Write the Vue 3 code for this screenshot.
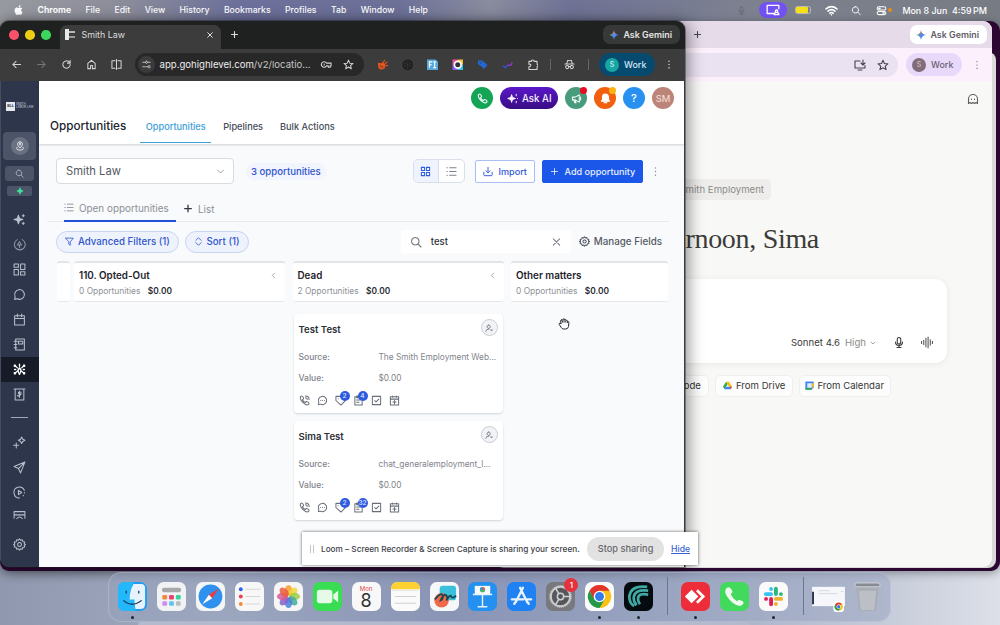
<template>
  <div class="desktop">
    <header class="menubar">
      <svg class="apple" viewBox="0 0 24 24">
        <path
          d="M16.4 12.7c0-2.500 2-3.700 2.100-3.800-1.200-1.700-3-1.900-3.600-2-1.500-.1-3 .9-3.700.9-.8 0-2-.9-3.200-.9-1.700 0-3.200 1-4.100 2.500-1.700 3-.4 7.400 1.300 9.900.8 1.200 1.800 2.500 3.100 2.500 1.200-.1 1.700-.8 3.200-.8s1.900.8 3.200.8 2.200-1.200 3-2.400c.9-1.400 1.300-2.700 1.300-2.800-.1 0-2.600-1-2.600-3.900zM14 5.300c.7-.8 1.100-2 1-3.100-1 0-2.200.7-2.900 1.500-.6.7-1.200 1.900-1 3 1.100.1 2.200-.6 2.900-1.400z"
        />
      </svg>
      <nav class="menus">
        <span v-for="m in menus" :key="m">{{ m }}</span>
      </nav>
      <div class="tray">
        <Icon name="mic" class="tray-mic" />
        <span class="tray-share"><Icon name="screen" /></span>
        <span class="battery"><i /></span>
        <Icon name="wifi" class="tray-wifi" />
        <Icon name="search" class="tray-search" />
        <Icon name="control" class="tray-control" />
        <i class="tray-dot" />
        <span class="clock">Mon 8 Jun&nbsp; 4:59<small> PM</small></span>
      </div>
    </header>

    <div class="slack-window" />
    <div class="grey-window" />

    <!-- Assistant window, mostly covered -->
    <section class="assistant">
      <div class="a-tabs">
        <Icon name="plus" class="a-plus" />
        <span class="gemini light"><GeminiStar />Ask Gemini</span>
      </div>
      <div class="a-toolbar">
        <div class="a-url">
          <Icon name="install" />
          <Icon name="star" />
        </div>
        <span class="profile light"><b>S</b>Work</span>
        <Icon name="dots" class="a-dots" />
      </div>
      <div class="a-page">
        <Icon name="ghost" class="ghost" />
        <div class="a-context"><span>Smith Employment</span></div>
        <h1>Good afternoon, Sima</h1>
        <div class="composer">
          <span class="model">Sonnet 4.6</span>
          <span class="effort">High</span>
          <Icon name="chevronDown" class="chev" />
          <Icon name="mic" class="c-mic" />
          <Icon name="wave" class="c-wave" />
        </div>
        <div class="chips">
          <span>Code</span>
          <span>
            <svg viewBox="0 0 24 24">
              <path d="M8 2h8l8 13h-8z" fill="#fbbc04" />
              <path d="M8 2l4 7-8 13-4-7z" fill="#34a853" />
              <path d="M8 15h16l-4 7H4z" fill="#4285f4" />
              <path d="M18 15h6l-4 7z" fill="#ea4335" />
            </svg>
            From Drive
          </span>
          <span>
            <svg viewBox="0 0 24 24">
              <path d="M1 3q0-2 2-2h18q2 0 2 2v14l-6 6H3q-2 0-2-2z" fill="#4285f4" />
              <path d="M18 6h5v11h-5z" fill="#fbbc04" />
              <path d="M1 18h17v5H3q-2 0-2-2z" fill="#34a853" />
              <path d="M6 6h12v12H6z" fill="#dceafe" />
            </svg>
            From Calendar
          </span>
        </div>
      </div>
    </section>

    <!-- Main browser window -->
    <section class="browser">
      <div class="tabstrip">
        <div class="lights"><i /><i /><i /></div>
        <div class="tab">
          <span class="favicon"><i /><i /></span>
          <span class="tab-title">Smith Law</span>
          <Icon name="close" />
        </div>
        <Icon name="plus" class="newtab" />
        <span class="gemini"><GeminiStar />Ask Gemini</span>
      </div>
      <div class="toolbar">
        <Icon name="back" />
        <Icon name="forward" class="dim" />
        <Icon name="reload" />
        <Icon name="home" />
        <Icon name="split" />
        <div class="url">
          <span class="tune"><Icon name="tune" /></span>
          <span class="address">app.gohighlevel.com<em>/v2/locatio...</em></span>
          <Icon name="key" class="key" />
          <Icon name="star" />
        </div>
        <div class="exts">
          <svg viewBox="0 0 24 24">
            <path d="M2 8l7 1 2-3 7 6-2 8q-9 5-13-2z" fill="#e8541c" />
            <path d="M13 8l3-6M16 10l6-4M18 14h5" stroke="#e8541c" stroke-width="2.500" />
            <path d="M7 13q1 5 6 4" stroke="#3c3c3c" stroke-width="2" fill="none" />
          </svg>
          <svg viewBox="0 0 24 24">
            <circle cx="12" cy="12" r="11" fill="#1b1b1b" />
            <path d="M12 4l7 4v8l-7 4-7-4V8zM5 8l14 8M19 8L5 16M12 4v16" stroke="#454545" fill="none" />
          </svg>
          <svg viewBox="0 0 24 24">
            <path d="M0 1h18l6 6v16H0z" fill="#58a9dc" />
            <path d="M5 18V6h6M5 12h5M13 6h6M16 6v12M13 18h6" stroke="#fff" stroke-width="2.200" fill="none" />
          </svg>
          <svg viewBox="0 0 24 24">
            <path d="M1 1h11v11H1z" fill="#f04fa0" />
            <path d="M12 1h11v11H12z" fill="#f3c02f" />
            <path d="M1 12h11v11H1z" fill="#8a5cf0" />
            <path d="M12 12h11v11H12z" fill="#35c2e0" />
            <circle cx="12" cy="12" r="7" fill="#333" stroke="#fff" stroke-width="3.500" />
          </svg>
          <svg viewBox="0 0 24 24">
            <path d="M2 3h9l11 10-8 8-5-6-7-4z" fill="#2568cf" />
            <circle cx="7" cy="8" r="2" fill="#174a99" />
          </svg>
          <svg viewBox="0 0 24 24" fill="none" stroke-width="3">
            <path d="M2 14l5 4 4-5" stroke="#3156c9" />
            <path d="M11 13h8" stroke="#7c3fc4" />
            <path d="M19 14l2-8" stroke="#8f35b5" />
          </svg>
          <Icon name="puzzle" />
        </div>
        <i class="sep" />
        <Icon name="incognito" class="incog" />
        <i class="sep" />
        <span class="profile"><b>S</b>Work</span>
        <Icon name="dots" class="t-dots" />
      </div>

      <div class="app">
        <aside class="sidebar">
          <div class="logo"><b>SLL</b><span>SMITH<br />LABOR LAW</span></div>
          <div class="account"><span><Icon name="person" /></span></div>
          <div class="side-search"><Icon name="search" /></div>
          <div class="side-ai">
            <svg viewBox="0 0 24 24"><path d="M12 1l4 7 7 4-7 4-4 7-4-7-7-4 7-4z" /></svg>
          </div>
          <div v-for="s in sideTop" :key="s" class="side-item" :class="{ active: s === 'nodes' }">
            <Icon :name="s" :class="'side-' + s" />
          </div>
          <div class="side-line" />
          <div v-for="s in sideBottom" :key="s" class="side-item" :class="'item-' + s">
            <Icon :name="s" />
          </div>
        </aside>

        <main class="page">
          <div class="page-head">
            <div class="actions">
              <span class="round green"><Icon name="phone" /></span>
              <span class="ask-ai"><Icon name="sparkles" />Ask AI</span>
              <span class="round teal"><Icon name="megaphone" /><i class="dot red" /></span>
              <span class="round orange"><Icon name="bell" class="bell" /><i class="dot amber" /></span>
              <span class="round blue">?</span>
              <span class="round rose">SM</span>
            </div>
            <div class="page-tabs">
              <h2>Opportunities</h2>
              <span class="on">Opportunities</span>
              <span>Pipelines</span>
              <span>Bulk Actions</span>
            </div>
          </div>

          <div class="controls">
            <div class="select">Smith Law<Icon name="chevronDown" /></div>
            <span class="count">3 opportunities</span>
            <div class="toggle">
              <span class="sel"><Icon name="grid" /></span>
              <span><Icon name="list" /></span>
            </div>
            <button class="import"><Icon name="download" />Import</button>
            <button class="add"><Icon name="plus" />Add opportunity</button>
            <Icon name="dots" class="more" />
          </div>

          <div class="lists">
            <span class="open"><Icon name="list" />Open opportunities</span>
            <span class="new"><Icon name="plus" />List</span>
          </div>

          <div class="filters">
            <span class="pill"><Icon name="filter" />Advanced Filters (1)</span>
            <span class="pill sort"><Icon name="sort" />Sort (1)</span>
            <div class="search">
              <Icon name="search" />
              <span>test</span>
              <Icon name="close" class="clear" />
            </div>
            <span class="manage"><Icon name="gear" />Manage Fields</span>
          </div>

          <div class="board">
            <div class="col stub"><div class="col-head" /></div>
            <div v-for="c in columns" :key="c.title" class="col" :class="{ last: c.last }">
              <div class="col-head">
                <b>{{ c.title }}</b>
                <Icon v-if="!c.last" name="chevronLeft" />
                <p>{{ c.count }} Opportunities <strong>$0.00</strong></p>
              </div>
              <article v-for="d in c.cards" :key="d.name" class="card">
                <h3>{{ d.name }}</h3>
                <span class="owner"><Icon name="userX" /></span>
                <dl>
                  <dt>Source:</dt>
                  <dd>{{ d.source }}</dd>
                  <dt>Value:</dt>
                  <dd>$0.00</dd>
                </dl>
                <div class="card-icons">
                  <span v-for="i in cardIcons" :key="i">
                    <Icon :name="i" />
                    <i v-if="d.badges[i]">{{ d.badges[i] }}</i>
                  </span>
                </div>
              </article>
            </div>
          </div>
        </main>
      </div>
    </section>

    <svg class="hand" viewBox="0 0 24 24">
      <path
        d="M6 13l-1.500-2q-3 0-2 3l4 6q1.500 3 5 3h3.500q5 0 6-5l.8-8q0-2.500-2.800-2V7q-1-2.500-3.500-1.500Q15 2.500 12 3.500 9.500 1.500 8 4.500 5 4 5.500 7z"
      />
      <path d="M8 5l1 5M12 4v6M15.500 6v4M19 8l-.5 3" />
    </svg>

    <div class="sharing">
      <span class="grip" />
      <span class="share-text">Loom – Screen Recorder &amp; Screen Capture is sharing your screen.</span>
      <span class="stop">Stop sharing</span>
      <a>Hide</a>
    </div>

    <footer class="dock">
      <div class="dock-item running">
        <svg viewBox="0 0 30 30">
          <rect width="30" height="30" rx="7" fill="#1f9df5" />
          <path d="M7 0h9q-4 8-4 17h5q0 7 1 13H7q-7 0-7-7V7q0-7 7-7z" fill="#23b8fb" />
          <path d="M16 2h8q4 0 4 4v17q0 5-5 5h-5q-1-5-1-10h-5q0-9 4-16z" fill="#e6f3fd" />
          <path d="M8.500 9v3M21.500 9v3M5.500 19q9 8 19 0" stroke="#153a5c" stroke-width="1.300" fill="none" />
        </svg>
      </div>
      <div class="dock-item">
        <svg viewBox="0 0 30 30">
          <rect width="30" height="30" rx="7" fill="#f1f2f4" />
          <rect x="5" y="6" width="20" height="4.500" rx="2.200" fill="#a8a8a8" />
          <rect v-for="(c, i) in launchColors" :key="i" :x="5.500 + (i % 3) * 7" :y="13.500 + Math.floor(i / 3) * 6.500" width="5" height="4.500" rx="1.300" :fill="c" />
        </svg>
      </div>
      <div class="dock-item">
        <svg viewBox="0 0 30 30">
          <rect width="30" height="30" rx="7" fill="#f4f5f7" />
          <circle cx="15" cy="15" r="12.300" fill="#2f90ee" />
          <path d="M23.500 7L13.300 13.200l3.500 3.500z" fill="#ee3b3b" />
          <path d="M6.500 23l6.800-9.800 3.500 3.500z" fill="#fff" />
        </svg>
      </div>
      <div class="dock-item">
        <svg viewBox="0 0 30 30">
          <rect width="30" height="30" rx="7" fill="#f7f7f8" />
          <circle cx="6" cy="7.500" r="2" fill="#2d63ee" />
          <circle cx="6" cy="15" r="2" fill="#e8434f" />
          <circle cx="6" cy="22.700" r="2" fill="#f08b2e" />
          <path d="M11 7.500h15M11 15h15M11 22.700h15" stroke="#d4d4d6" />
        </svg>
      </div>
      <div class="dock-item">
        <svg viewBox="0 0 30 30">
          <rect width="30" height="30" rx="7" fill="#f7f6f6" />
          <ellipse v-for="(c, i) in petals" :key="c" cx="15" cy="8.700" rx="3.800" ry="5.600" :fill="c" opacity=".85" :transform="`rotate(${i * 45} 15 15)`" />
        </svg>
      </div>
      <div class="dock-item">
        <svg viewBox="0 0 30 30">
          <rect width="30" height="30" rx="7" fill="#38dd53" />
          <rect x="4" y="8" width="16" height="14" rx="3" fill="#e6fae8" />
          <path d="M21 13l5-4v12l-5-4z" fill="#e6fae8" />
        </svg>
      </div>
      <div class="dock-item dock-cal"><small>Mon</small><b>8</b></div>
      <div class="dock-item">
        <svg viewBox="0 0 30 30">
          <rect width="30" height="30" rx="7" fill="#fafafa" />
          <path d="M7 0h16q7 0 7 7.500H0Q0 0 7 0z" fill="#fdd131" />
          <path d="M4 15h22M4 22h22" stroke="#cfcfcf" />
          <path d="M1 8.700h28" stroke="#d9d2b8" stroke-dasharray="1 1" />
        </svg>
      </div>
      <div class="dock-item">
        <svg viewBox="0 0 30 30">
          <rect width="30" height="30" rx="7" fill="#f5f7f8" />
          <rect x="10" y="4" width="17" height="15" rx="3" fill="#3ac0dc" />
          <circle cx="12" cy="19" r="7.500" fill="#f0694a" />
          <path d="M5 18q7-8 8-4t-2 5q4-8 6-5t0 5q4-7 5-4t5-1" stroke="#174650" stroke-width="1.800" fill="none" />
        </svg>
      </div>
      <div class="dock-item">
        <svg viewBox="0 0 30 30">
          <rect width="30" height="30" rx="7" fill="#2491f1" />
          <rect x="7" y="4" width="16" height="9" fill="#f6f8fa" />
          <path d="M5 13h20M15 13v12M10 25.500h10" stroke="#e9f3fc" stroke-width="1.500" />
          <circle cx="15" cy="8" r="2.700" fill="#42b868" />
          <path d="M15 8V5.300A2.700 2.700 0 0 1 17.700 8z" fill="#eb5a42" />
          <path d="M15 8h-2.700A2.700 2.700 0 0 1 15 5.300z" fill="#3789ec" />
        </svg>
      </div>
      <div class="dock-item">
        <svg viewBox="0 0 30 30">
          <rect width="30" height="30" rx="7" fill="#2082f2" />
          <path d="M16.500 6L9 21M13.500 6L21 21M5 18h12M21 18h4M7.500 22.500l1-1.500M22.500 22.500L21.500 21" stroke="#e8f3ff" stroke-width="2.400" stroke-linecap="round" />
        </svg>
      </div>
      <div class="dock-item">
        <svg viewBox="0 0 30 30">
          <rect width="30" height="30" rx="7" fill="#77797c" />
          <circle cx="15" cy="15" r="10" fill="#55575a" stroke="#cbccce" stroke-width="2" />
          <circle cx="15" cy="15" r="11.300" fill="none" stroke="#cbccce" stroke-dasharray="1 1" />
          <circle cx="15" cy="15" r="3.300" fill="none" stroke="#d1d2d4" stroke-width="1.500" />
          <path d="M18 15h7M13.500 12.500L10 6.500M13.500 17.500L10 23.500" stroke="#d1d2d4" stroke-width="1.600" />
        </svg>
        <i class="alert">1</i>
      </div>
      <div class="dock-item running">
        <svg viewBox="0 0 30 30">
          <rect width="30" height="30" rx="7" fill="#fafafa" />
          <g transform="translate(3 3)"><ChromeMark /></g>
        </svg>
      </div>
      <div class="dock-item running">
        <svg viewBox="0 0 30 30">
          <rect width="30" height="30" rx="7" fill="#050b0e" />
          <path d="M24 5Q7 3 5.500 15q0 7 5 10M25 9Q11 7 10 16q0 5 3 8M25 13Q15 11 14.500 17q0 3.500 2 6" stroke="#3fa9a5" stroke-width="2.800" fill="none" />
        </svg>
      </div>
      <i class="dock-sep" />
      <div class="dock-item running">
        <svg viewBox="0 0 30 30">
          <rect width="30" height="30" rx="7" fill="#ee2d3b" />
          <path d="M11 8l7 7-7 7-7-7z" fill="#fff" />
          <path d="M16.500 8.500L23 15l-6.500 6.500" fill="none" stroke="#fff" stroke-width="2.800" />
        </svg>
      </div>
      <div class="dock-item">
        <svg viewBox="0 0 30 30">
          <rect width="30" height="30" rx="7" fill="#43d95c" />
          <path d="M7 6q3-2 5 2l1 2q0 1-2 2.500 2 5 6.500 7.500 2-2 3-1.500l3 1.500q2 2-1 4-4 2-10-3-6-6-7-10-.5-3 1.500-5z" fill="#effbf0" />
        </svg>
      </div>
      <div class="dock-item running">
        <svg viewBox="0 0 30 30">
          <rect width="30" height="30" rx="7" fill="#fbfafb" />
          <g stroke-width="4" stroke-linecap="round">
            <path d="M7 12.500h5.500M12.500 7.300v0" stroke="#36c5f0" />
            <path d="M17.500 7v5.500M22.700 12.500v0" stroke="#2eb67d" />
            <path d="M17.500 17.500H23M17.500 22.700v0" stroke="#ecb22e" />
            <path d="M12.500 17.500V23M7.300 17.500v0" stroke="#e01e5a" />
          </g>
        </svg>
      </div>
      <i class="dock-sep right" />
      <div class="dock-item minimized">
        <svg viewBox="0 0 35 30">
          <rect x=".5" y="5" width="34" height="20" fill="#f6f7fa" />
          <path d="M1.500 10v13" stroke="#2c3547" stroke-width="2" />
          <path d="M7 9h12M30 10h3M7 12h20" stroke="#ccd2dc" stroke-width=".8" />
          <rect x="22.500" y="20" width="11" height="11" rx="2.500" fill="#fff" />
          <g transform="translate(23.700 21.200) scale(.36)"><ChromeMark /></g>
        </svg>
      </div>
      <div class="dock-item trash">
        <svg viewBox="0 0 30 30">
          <path d="M3 2.500h24l-3 26q-.3 1.500-2 1.500H8q-1.700 0-2-1.500z" fill="#a9adb4" />
          <path d="M6 9l2 20h14l2-20z" fill="#bcc0c6" />
          <rect x="2" y="1" width="26" height="4" rx="2" fill="#878b92" stroke="#d3d6db" />
        </svg>
      </div>
    </footer>
    <i class="shelf" />
  </div>
</template>

<script setup>
import { h } from "vue";

const icons = {
  mic: "M12 2a3.500 3.500 0 0 0-3.500 3.500v6a3.500 3.500 0 0 0 7 0v-6A3.500 3.500 0 0 0 12 2zM5 11c0 9 14 9 14 0M12 18v4M8 22h8",
  screen: "M14 18H2V4h20v6M18 12a2 2 0 1 0 .1 0M14 20q0-4 4-4t4 4z",
  wifi: "M2 9q10-8 20 0M5.500 13q6.500-5 13 0M9 17q3-2.500 6 0M12 20v0",
  search: "M10.500 3a7.500 7.500 0 1 0 .1 0M16 16l6 6",
  control: "M6 4h12a3 3 0 0 1 0 7H6a3 3 0 0 1 0-7zM6 14h12a3 3 0 0 1 0 7H6a3 3 0 0 1 0-7zM6 7h3v1H6zM15 17h3v1h-3z",
  install: "M12 4H2v14h20v-5M8 22h8M18 2v9M14 8l4 4 4-4",
  star: "M12 2.500l2.800 6.600 7 .6-5.300 4.600 1.600 7L12 17.500l-6.100 3.800 1.600-7-5.300-4.600 7-.6z",
  dots: "M12 4v.1M12 12v.1M12 20v.1",
  ghost: "M3 21v-9a9 9 0 0 1 18 0v9l-3-2-3 2-3-2-3 2-3-2zM9 12v1M15 12v1",
  wave: "M2 10v4M6 8v8M10 4v16M14 2v20M18 7v10M22 10v4",
  close: "M5 5l14 14M19 5L5 19",
  plus: "M12 4v16M4 12h16",
  back: "M21 12H4M11 5l-7 7 7 7",
  forward: "M3 12h17M13 5l7 7-7 7",
  reload: "M20 12a8 8 0 1 1-2.500-5.800L20 9M20 3v6h-6",
  home: "M4 21V9.500L12 3l8 6.500V21h-6v-7h-4v7z",
  split: "M9 4H2v16h7M15 4h7v16h-7M12 1v22",
  tune: "M2 6h7M15 6h7M12 3a3 3 0 1 0 .1 0M2 18h7M19 15a3 3 0 1 0 .1 0M12 18h4",
  key: "M7 6a6 6 0 1 0 5 9h4v3h4v-3h2V9H12a6 6 0 0 0-5-3zM7 11v2",
  puzzle: "M4 5h5q0-3 3-3t3 3h6v6q2 0 2 2.500T21 16v6H4v-6q4 0 4-3t-4-2z",
  incognito: "M2 11h20M6 10l2-7 4 1 4-1 2 7M7 14a3.500 3.500 0 1 0 .1 0M17 14a3.500 3.500 0 1 0 .1 0M10 17q2-1 4 0",
  person: "M12 2a6 6 0 0 0-6 6q0 3 6 9 6-6 6-9a6 6 0 0 0-6-6zM12 6a2 2 0 1 0 .1 0M5 15q-5 6 7 7 12-1 7-7",
  sparkle: "M10 4l2 6 6 2-6 2-2 6-2-6-6-2 6-2zM19 3v4M17 5h4M19 17v4M17 19h4",
  sparkles: "M9 4l2 6 6 2-6 2-2 6-2-6-6-2 6-2zM19 3v3M19 18v3M22 12h.1",
  up: "M8 3a10 10 0 1 0 9 0M12 18v-5H8l4-6 4 6h-4",
  tiles: "M2 2h8v6H2zM14 2h8v10h-8zM2 12h8v10H2zM14 16h8v6h-8z",
  chat: "M3 21l1-5a9 9 0 1 1 4 4z",
  calendar: "M3 5h18v17H3zM3 10h18M8 2v5M16 2v5",
  notebook: "M5 2h16v20H5zM2 6h6M2 12h5M2 18h5M10 6h8v5h-8z",
  nodes: "M4 5l4 4M20 5l-4 4M4 19l4-4M20 19l-4-4M12 2v4M12 9q5 4 0 12-5-8 0-12M3 12h2M19 12h2M2.500 4h2v2h-2zM19.500 4h2v2h-2zM2.500 18h2v2h-2zM19.500 18h2v2h-2z",
  invoice: "M2 2h20M4 2v20h16V2M15 8q-5-2-5 1t4 2-4 4q-1 0-2-1M12 6v11",
  magic: "M16 2l2 4 4 2-4 2-2 4-2-4-4-2 4-2zM6 13v9M1 17h9",
  send: "M22 2L2 10l8 4 4 8zM22 2L10 14",
  playc: "M21 8a10 10 0 1 0-9 14M10 8l6 4-6 4zM21 12v1M19 17v1",
  store: "M2 3h20M2 3v12M22 3v12M2 9h20M7 16q5-6 10 0",
  gear: "M12 1.500l2 2.700 3.300-.9.900 3.400 3.400.9-.9 3.300L23 12l-2.300 1.100.9 3.300-3.400.9-.9 3.400-3.300-.9-2 2.700-2-2.700-3.300.9-.9-3.400-3.400-.9.900-3.300L1 12l2.300-1.100-.9-3.300 3.400-.9.900-3.400 3.300.9zM12 8.500a3.500 3.500 0 1 0 .1 0",
  phone: "M4 3q3-2 5 2l1 3-2.500 2.500q2 4.500 6 6L16 14l4 1.500q3 2 1 5Q17 24 8 16 0 7 4 3z",
  megaphone: "M3 9h6l9-5v16l-9-5H3zM6 15l2 6h3l-2-6M21 9v6",
  bell: "M12 2a6.500 6.500 0 0 0-6.500 6.500V14L3 18h18l-2.500-4V8.500A6.500 6.500 0 0 0 12 2zM9 21h6",
  chevronDown: "M4 8l8 8 8-8",
  chevronLeft: "M16 4l-8 8 8 8",
  grid: "M3 3h7v7H3zM14 3h7v7h-7zM3 14h7v7H3zM14 14h7v7h-7z",
  list: "M8 4h14M8 12h14M8 20h14M2 4h1M2 12h1M2 20h1",
  download: "M12 2v13M7 10l5 5 5-5M2 14v6q0 2 2 2h16q2 0 2-2v-6",
  filter: "M2 3h20l-8 10v9l-4-3v-6z",
  sort: "M5 9l7-7 7 7M5 15l7 7 7-7",
  userX: "M11 3a5 5 0 1 0 .1 0M2 22q2-8 10-7M18 17l3 3M21 17l-3 3",
  call: "M4 3q3-2 5 2l1 3-2.500 2.500q2 4.500 6 6L16 14l4 1.500q3 2 1 5Q17 24 8 16 0 7 4 3zM14 2q8 0 8 8M14 6q4 0 4 4",
  message: "M3 21l1-5a9 9 0 1 1 4 4zM8 12h.1M12 12h.1M16 12h.1",
  tag: "M2 3h10l10 10-9 9L2 12zM7 8h.1",
  note: "M4 4h16v18H4zM8 2h8v4H8zM8 11h8M8 16h5",
  task: "M3 3h18v18H3zM8 12l3 3 6-6",
  event: "M3 4h18v18H3zM3 9h18M8 2v3M16 2v3M12 12v7M8.500 15.500h7",
};

const Icon = (props) =>
  h("svg", { class: "icon", viewBox: "0 0 24 24" }, [h("path", { d: icons[props.name] })]);
Icon.props = ["name"];

const GeminiStar = () =>
  h("svg", { viewBox: "0 0 24 24" }, [
    h("path", { d: "M12 0q1 7 4 9l-4 3-4-3q3-2 4-9z", fill: "#e9705e" }),
    h("path", { d: "M24 12q-7 1-9 4l-3-4 3-4q2 3 9 4z", fill: "#3f83f5" }),
    h("path", { d: "M12 24q-1-7-4-9l4-3 4 3q-3 2-4 9z", fill: "#477ff0" }),
    h("path", { d: "M0 12q7-1 9-4l3 4-3 4q-2-3-9-4z", fill: "#55b16b" }),
    h("path", { d: "M12 6l6 6-6 6-6-6z", fill: "#5d86e8" }),
  ]);

const ChromeMark = () =>
  h("g", [
    h("path", { d: "M12 12V0a12 12 0 0 1 10.400 6A12 12 0 0 1 12 24z", fill: "#fbc116" }),
    h("path", { d: "M1.600 6a12 12 0 0 1 20.800 0H12l-6 9z", fill: "#e3342b" }),
    h("path", { d: "M12 24l5.300-9L12 12l-5.300 3L1.600 6A12 12 0 0 0 12 24z", fill: "#279847" }),
    h("circle", { cx: 12, cy: 12, r: 6, fill: "#fff" }),
    h("circle", { cx: 12, cy: 12, r: 4.6, fill: "#317bea" }),
  ]);

const menus = ["Chrome", "File", "Edit", "View", "History", "Bookmarks", "Profiles", "Tab", "Window", "Help"];
const sideTop = ["sparkle", "up", "tiles", "chat", "calendar", "notebook", "nodes", "invoice"];
const sideBottom = ["magic", "send", "playc", "store", "gear"];
const cardIcons = ["call", "message", "tag", "note", "task", "event"];

const columns = [
  { title: "110. Opted-Out", count: 0, cards: [] },
  {
    title: "Dead",
    count: 2,
    cards: [
      { name: "Test Test", source: "The Smith Employment Web...", badges: { tag: 2, note: 4 } },
      { name: "Sima Test", source: "chat_generalemployment_l...", badges: { tag: 2, note: 32 } },
    ],
  },
  { title: "Other matters", count: 0, cards: [], last: true },
];

const launchColors = ["#f08b3c", "#ee3e6d", "#30d69a", "#cf8df0", "#5ec4ef", "#b8bdc2"];
const petals = ["#f6a12b", "#f3d43a", "#9ccc48", "#3fae9c", "#4a83dc", "#8a60c9", "#d85a92", "#ec5a40"];
</script>

<style>
html,
body {
  margin: 0;
  overflow: hidden;
}
</style>

<style scoped>
.desktop {
  position: relative;
  width: 1000px;
  height: 625px;
  overflow: hidden;
  font-family: Inter, "Liberation Sans", sans-serif;
  color: #2b2f38;
  background:
    linear-gradient(90deg, #989aa1 0, #8c8d9a 12%, #6c709b 24%, #6d7198 40%, #8a8c9f 49%, #6f7295 57%, #7d818f 75%, #777c84 100%) top / 100% 60px no-repeat,
    linear-gradient(90deg, #8f98ae 0, #a2abc0 22%, #7e87ad 45%, #929dbd 60%, #c3c9d8 87%, #dde0e8 100%);
}
.desktop *,
.desktop *::before {
  box-sizing: border-box;
}
.icon {
  width: 11px;
  height: 11px;
  flex: none;
  fill: none;
  stroke: currentColor;
  stroke-width: 2.200;
  stroke-linecap: round;
  stroke-linejoin: round;
}

/* Menu bar */
.menubar {
  display: flex;
  align-items: center;
  height: 20px;
  padding-left: 13px;
  color: #fff;
  font-size: 9px;
  font-weight: 500;
}
.apple {
  width: 12px;
  height: 12px;
  fill: #fff;
  margin-right: 12.500px;
}
.menus {
  display: flex;
  gap: 14.400px;
  font-size: 8.700px;
}
.menus span:first-child {
  font-weight: 700;
}
.tray {
  display: flex;
  align-items: center;
  margin-left: auto;
  padding-right: 13px;
}
.tray-mic {
  width: 9px;
  color: #666a72;
  margin-right: 13px;
}
.tray-share {
  display: grid;
  place-items: center;
  width: 28px;
  height: 16px;
  border-radius: 8px;
  background: #7252f3;
}
.tray-share .icon {
  width: 14px;
  height: 14px;
}
.battery {
  width: 16px;
  height: 8px;
  margin-left: 8px;
  border: 1px solid #b8bbae;
  border-radius: 2.500px;
}
.battery i {
  display: block;
  width: 12px;
  height: 6px;
  border-radius: 1px;
  background: #f4df18;
}
.tray-wifi {
  width: 13px;
  height: 13px;
  margin-left: 14px;
  stroke-width: 3;
}
.tray-search {
  width: 10px;
  margin-left: 13px;
}
.tray-control {
  margin-left: 15px;
}
.tray-dot {
  width: 4px;
  height: 4px;
  margin: 0 10px 0 1px;
  border-radius: 50%;
  background: #e98d18;
}
.clock {
  font-size: 8.900px;
  white-space: nowrap;
}
.clock small {
  font-size: 9px;
  margin-left: -1px;
}

/* Windows behind */
.slack-window {
  position: absolute;
  left: 0;
  top: 21px;
  width: 1000px;
  height: 550px;
  border-radius: 10px 10px 9px 9px;
  background: #2b0731;
  box-shadow: 0 2px 10px rgba(0, 0, 0, 0.35);
}
.grey-window {
  position: absolute;
  right: 4px;
  top: 52px;
  width: 500px;
  height: 516px;
  border-radius: 8px;
  background: #dddadb;
}
.assistant {
  position: absolute;
  left: 460px;
  top: 21px;
  width: 532px;
  height: 546px;
  border-radius: 9px;
  overflow: hidden;
  background: #f8f8f7;
}
.a-tabs {
  display: flex;
  align-items: center;
  height: 27px;
  padding: 0 5px 0 233px;
  background: #e5dbe9;
}
.a-plus {
  width: 9px;
  height: 9px;
  margin-right: auto;
  stroke-width: 3;
  color: #4a4450;
}
.gemini {
  display: flex;
  align-items: center;
  gap: 4px;
  height: 19px;
  padding: 0 8px 0 6px;
  border-radius: 7px;
  background: #373838;
  color: #e4e4e4;
  font-size: 8.900px;
  font-weight: 600;
}
.gemini svg {
  width: 10px;
  height: 10px;
}
.gemini.light {
  background: #fff;
  color: #615d67;
}
.a-toolbar {
  display: flex;
  align-items: center;
  height: 33px;
  padding: 0 10px 0 0;
  background: #fbf0fb;
}
.a-url {
  display: flex;
  align-items: center;
  justify-content: flex-end;
  gap: 11px;
  width: 438px;
  height: 24px;
  padding-right: 9px;
  border-radius: 0 12px 12px 0;
  background: #ebe2f1;
  color: #46424c;
}
.a-url .icon {
  width: 12px;
  height: 12px;
}
.profile {
  display: flex;
  align-items: center;
  gap: 5px;
  height: 23px;
  padding: 0 9px 0 6px;
  border-radius: 12px;
  background: #064a6f;
  color: #d2e9f8;
  font-size: 8.900px;
  font-weight: 500;
}
.profile b {
  display: grid;
  place-items: center;
  width: 14px;
  height: 14px;
  border-radius: 50%;
  background: #17a6a3;
  color: #c6f1ef;
  font-size: 7px;
  font-weight: 500;
}
.profile.light {
  margin-left: 8px;
  background: #e8d8fa;
  color: #69616f;
}
.profile.light b {
  background: #816c78;
  color: #cdbfc8;
}
.a-dots {
  width: 10px;
  height: 10px;
  margin-left: auto;
  color: #77717c;
  stroke-width: 3;
}
.a-page {
  display: flex;
  flex-direction: column;
  align-items: flex-end;
  padding: 12px 45px 0 0;
}
.ghost {
  width: 12px;
  height: 12px;
  margin-right: -32px;
  color: #5d5d5b;
}
.a-context {
  margin: 74px 176px 0 0;
}
.a-context span {
  display: block;
  height: 21px;
  padding: 0 7px;
  border-radius: 5px;
  background: #eeedec;
  color: #8c8b88;
  font-size: 9.600px;
  line-height: 21px;
}
.a-page h1 {
  margin: 21px 128px 0 0;
  color: #3c3b38;
  font: 400 28px/36px "Liberation Serif", serif;
  letter-spacing: -0.300px;
  white-space: nowrap;
}
.composer {
  display: flex;
  align-items: flex-end;
  justify-content: flex-end;
  width: 440px;
  height: 84px;
  margin-top: 22px;
  padding: 0 12px 14px;
  border-radius: 12px;
  background: #fff;
  box-shadow: 0 1px 6px rgba(0, 0, 0, 0.07);
  font-size: 9.600px;
  line-height: 13px;
  color: #3b3a38;
}
.effort {
  margin-left: 5px;
  color: #8b8985;
}
.chev {
  width: 6px;
  height: 6px;
  margin: 0 0 3px 4px;
  color: #8b8985;
  stroke-width: 3;
}
.c-mic {
  width: 12px;
  height: 13px;
  margin-left: 17px;
}
.c-wave {
  width: 16px;
  height: 13px;
  margin-left: 14px;
  stroke-width: 1.700;
}
.chips {
  display: flex;
  gap: 6px;
  margin: 11.500px 56px 0 0;
}
.chips span {
  display: flex;
  align-items: center;
  gap: 4px;
  height: 22px;
  padding: 0 7px;
  border: 1px solid #efefed;
  border-radius: 5px;
  background: #fdfdfd;
  color: #373634;
  font-size: 9.600px;
  white-space: nowrap;
}
.chips span:last-child {
  gap: 3px;
  padding: 0 6px 0 5px;
}
.chips svg {
  width: 9px;
  height: 9px;
}

/* Main browser */
.browser {
  position: absolute;
  left: 0;
  top: 21px;
  width: 685px;
  height: 546px;
  overflow: hidden;
  border-radius: 9px 9px 0 9px;
  background: #3c3c3c;
  box-shadow: 3px 1px 16px rgba(0, 0, 0, 0.45), 0 0 0 1px rgba(40, 40, 45, 0.400);
}
.tabstrip {
  display: flex;
  align-items: center;
  height: 28px;
  padding: 0 5px 0 9px;
  background: #1f2020;
  color: #dcdcdc;
}
.lights {
  display: flex;
  gap: 6.500px;
}
.lights i {
  width: 9.500px;
  height: 9.500px;
  border-radius: 50%;
  background: #f9516a;
}
.lights i:nth-child(2) {
  background: #eece12;
}
.lights i:nth-child(3) {
  background: #3bd75c;
}
.tab {
  display: flex;
  align-items: center;
  width: 161px;
  height: 24px;
  margin: 4px 0 0 9px;
  padding: 0 7px 5px 5px;
  border-radius: 7px 7px 0 0;
  background: #3c3c3c;
  font-size: 8.900px;
}
.favicon {
  display: flex;
  align-items: center;
  width: 11px;
  height: 11px;
  border-left: 4px solid #e9e9e9;
}
.favicon i {
  width: 3px;
  height: 7px;
  border-top: 2px solid #b8b8b8;
  border-bottom: 2px solid #999;
}
.tab-title {
  margin: 0 auto 0 6px;
}
.tab .icon {
  width: 8px;
  height: 8px;
  stroke-width: 3;
}
.newtab {
  width: 9px;
  height: 9px;
  margin: 0 0 1px 9px;
  stroke-width: 3;
}
.tabstrip .gemini {
  margin: 0 0 1px auto;
}
.toolbar {
  display: flex;
  align-items: center;
  height: 32px;
  padding: 0 0 1px 10.500px;
  color: #d6d6d6;
}
.toolbar > .icon {
  margin-right: 14px;
}
.toolbar > .dim {
  color: #757575;
}
.url {
  display: flex;
  align-items: center;
  width: 229px;
  height: 23px;
  margin-left: -1px;
  padding: 0 10px 0 3px;
  border-radius: 12px;
  background: #282828;
}
.tune {
  display: grid;
  place-items: center;
  width: 17px;
  height: 17px;
  border-radius: 50%;
  background: #3b3b3b;
}
.tune .icon {
  width: 9px;
}
.address {
  margin: 0 auto 0 5px;
  color: #eeeeee;
  font-size: 9.600px;
}
.address em {
  color: #c5c5c5;
  font-style: normal;
}
.key {
  width: 13px;
  margin-right: 10px;
}
.exts {
  display: flex;
  gap: 13.500px;
  margin-left: 13px;
}
.exts svg {
  width: 11.500px;
  height: 11.500px;
}
.sep {
  width: 1px;
  height: 11px;
  margin-left: 12px;
  background: #666;
}
.toolbar > .incog {
  margin: 0 1px 0 13px;
}
.toolbar .profile {
  margin-left: 10px;
}
.toolbar > .t-dots {
  width: 10px;
  margin: 0 0 0 9px;
  stroke-width: 3.500;
}

.app {
  display: flex;
  height: 486px;
}
.sidebar {
  width: 39px;
  padding-top: 17px;
  border-left: 1px solid #454d5e;
  background: #2d364a;
  color: #b8c0cd;
}
.logo {
  display: flex;
  align-items: center;
  gap: 1px;
  height: 16px;
  padding-left: 5px;
  color: #d4d8e0;
  font-size: 3px;
  line-height: 3.500px;
  white-space: nowrap;
}
.logo b {
  width: 9px;
  height: 9px;
  background: #e7e9ee;
  color: #2d364a;
  font-size: 4px;
  line-height: 7px;
  text-align: center;
}
.account {
  display: grid;
  place-items: center;
  width: 33px;
  height: 28px;
  margin: 18px 0 0 2px;
  border-radius: 4px;
  background: #4c5567;
}
.account span {
  display: grid;
  place-items: center;
  width: 18px;
  height: 18px;
  border-radius: 50%;
  background: #6a7281;
  color: #e5e8ed;
}
.account .icon {
  width: 10px;
  height: 10px;
}
.side-search {
  display: grid;
  place-items: center;
  width: 29px;
  height: 15px;
  margin: 6px 0 0 4px;
  border-radius: 3px;
  background: #4c5567;
}
.side-search .icon {
  width: 9px;
  height: 9px;
}
.side-ai {
  display: grid;
  place-items: center;
  width: 25px;
  height: 10px;
  margin: 5px 0 10.500px 6px;
  border-radius: 2px;
  background: #4c5567;
}
.side-ai svg {
  width: 8px;
  height: 8px;
  fill: #3fe09a;
}
.side-item {
  display: grid;
  place-items: center;
  height: 25.100px;
  padding-right: 1px;
}
.side-item .icon {
  width: 13px;
  height: 13px;
  stroke-width: 1.900;
}
.side-item .side-sparkle {
  fill: currentColor;
}
.side-item .side-up {
  opacity: 0.7;
}
.side-item.active {
  background: #161b27;
  color: #fff;
}
.side-item.active .icon {
  stroke-width: 2.500;
}
.side-line {
  width: 17px;
  height: 1px;
  margin: 10px 0 11.500px 10px;
  background: #a1a9b6;
}
.item-store {
  height: 22px;
}
.item-gear {
  height: 35px;
}

/* Page */
.page {
  display: flex;
  flex-direction: column;
  width: 645px;
  background: #f8fafb;
}
.page-head {
  height: 63px;
  padding-top: 6px;
  background: #fff;
  box-shadow: 0 1px 2px rgba(30, 40, 60, 0.2);
}
.actions {
  display: flex;
  justify-content: flex-end;
  gap: 7px;
  padding-right: 10px;
}
.round {
  position: relative;
  display: grid;
  place-items: center;
  width: 22px;
  height: 22px;
  border-radius: 50%;
  color: #fff;
  font-size: 9.500px;
}
.round .bell {
  fill: #fff;
}
.green {
  background: #13a456;
}
.teal {
  background: #489b7b;
}
.orange {
  background: #f2600f;
}
.blue {
  background: #2790f0;
  font-size: 11px;
  font-weight: 500;
}
.rose {
  background: #bd8479;
  color: #f5e3df;
}
.dot {
  position: absolute;
  right: 0;
  top: 0;
  width: 7px;
  height: 7px;
  border-radius: 50%;
}
.red {
  background: #ef0722;
}
.amber {
  background: #fbb213;
}
.ask-ai {
  display: flex;
  align-items: center;
  gap: 3px;
  width: 58px;
  height: 22px;
  padding-left: 7px;
  border-radius: 11px;
  background: linear-gradient(180deg, #5b17c9, #380c84);
  color: #f5effd;
  font-size: 9.700px;
  font-weight: 500;
  white-space: nowrap;
}
.ask-ai .icon {
  width: 12px;
  fill: currentColor;
}
.page-tabs {
  display: flex;
  align-items: center;
  height: 34px;
  padding-left: 11px;
  color: #454b57;
  font-size: 9.200px;
  font-weight: 500;
}
.page-tabs h2 {
  margin: 0 14px 1px 0;
  font-size: 11.700px;
  line-height: 16px;
  font-weight: 500;
  color: #20242c;
}
.page-tabs span {
  margin-left: 17px;
}
.page-tabs .on {
  height: 33px;
  margin: 0 -5px 0 0;
  padding: 0 5.500px;
  border-bottom: 1.500px solid #3ba0d8;
  color: #3ba0d8;
  line-height: 33px;
}
.controls {
  display: flex;
  align-items: center;
  height: 26px;
  margin: 14px 23.500px 0 17px;
}
.select {
  display: flex;
  align-items: center;
  justify-content: space-between;
  width: 178px;
  height: 26px;
  padding: 0 8px 0 9px;
  border: 1px solid #d8dbe0;
  border-radius: 4px;
  background: #fff;
  color: #535863;
  font-size: 11.200px;
}
.select .icon {
  width: 9px;
  color: #8a8f99;
}
.count {
  margin: 0 auto 0 12px;
  padding: 3px 5px;
  border-radius: 8px;
  background: #f2f5fd;
  color: #2f54cf;
  font-size: 9.600px;
  font-weight: 500;
}
.toggle {
  display: flex;
  width: 52px;
  height: 24px;
  margin-right: 10px;
  overflow: hidden;
  border: 1px solid #d9dfe9;
  border-radius: 5px;
  background: #fff;
}
.toggle span {
  display: grid;
  place-items: center;
  width: 25px;
  color: #7c828d;
}
.toggle .sel {
  width: 26px;
  border-right: 1px solid #d9dfe9;
  background: #eef3fd;
  color: #2b5be0;
}
.import,
.add {
  display: flex;
  align-items: center;
  gap: 6px;
  height: 23px;
  padding: 0 7px;
  border: 1px solid #a9bef2;
  border-radius: 2px;
  background: #fff;
  color: #2d58d6;
  font: 500 9.100px Inter, sans-serif;
  white-space: nowrap;
}
.import {
  width: 60px;
}
.add {
  width: 101px;
  margin-left: 7px;
  border-color: #1b57e8;
  background: #1b57e8;
  color: #e9effe;
}
.import .icon {
  width: 10px;
}
.add .icon {
  width: 9px;
}
.more {
  margin-left: 7px;
  color: #858a94;
  stroke-width: 3;
}
.lists {
  display: flex;
  align-items: center;
  height: 27px;
  margin: 11px 15px 0 8px;
  padding-left: 17px;
  border-bottom: 1px solid #e9ebef;
  color: #8b8f97;
  font-size: 9.900px;
}
.lists span {
  display: flex;
  align-items: center;
  gap: 5px;
  height: 28px;
  padding-top: 1px;
}
.lists .open {
  position: relative;
  width: 112px;
  border-bottom: 2px solid #1f50d6;
}
.lists .icon {
  width: 10px;
}
.lists .new {
  margin-left: 7px;
}
.lists .new .icon {
  color: #2e333d;
  stroke-width: 3;
}
.filters {
  display: flex;
  align-items: center;
  height: 23px;
  margin: 8px 15px 0 17px;
}
.pill {
  display: flex;
  flex: none;
  align-items: center;
  gap: 4px;
  width: 123px;
  height: 22px;
  padding-left: 8px;
  border: 1px solid #c9d4f2;
  border-radius: 11px;
  background: #eef2fc;
  color: #3055cd;
  font-size: 9.700px;
  font-weight: 500;
  white-space: nowrap;
}
.pill .icon {
  width: 9px;
}
.pill.sort {
  width: 64px;
  margin-left: 5.500px;
}
.search {
  display: flex;
  flex: none;
  align-items: center;
  width: 170px;
  height: 23px;
  margin-left: auto;
  padding: 0 9px;
  border-radius: 3px;
  background: #fff;
  font-size: 9.500px;
  font-weight: 500;
}
.search span {
  margin-left: 9px;
}
.search .icon {
  width: 12px;
  height: 12px;
  color: #747983;
}
.search .clear {
  width: 11px;
  margin-left: auto;
}
.manage {
  display: flex;
  flex: none;
  align-items: center;
  gap: 4px;
  margin: 0 7px 0 8px;
  color: #555a65;
  font-size: 9.800px;
  font-weight: 500;
  white-space: nowrap;
}
.board {
  display: flex;
  gap: 7.500px;
  margin: 8px 0 0 18px;
}
.col {
  flex: none;
  width: 211px;
}
.col.stub {
  width: 9.500px;
}
.col.last {
  width: 157px;
}
.col-head {
  display: flex;
  flex-wrap: wrap;
  align-items: center;
  justify-content: space-between;
  align-content: flex-start;
  height: 41px;
  padding: 5.500px 8px 0 5px;
  border-top: 2px solid #e3e4e7;
  border-bottom: 1px solid #e5e6e9;
  border-radius: 3px;
  background: #fff;
  font-size: 9.850px;
}
.col-head b {
  line-height: 13px;
  font-weight: 600;
  color: #1f232b;
}
.col-head .icon {
  width: 7px;
  height: 7px;
  color: #777c86;
}
.col-head p {
  width: 100%;
  margin: 3px 0 0;
  color: #8c9098;
  font-size: 8.400px;
  line-height: 12px;
}
.col-head strong {
  margin-left: 5px;
  font-weight: 600;
  color: #272b33;
}
.card {
  position: relative;
  width: 209px;
  height: 99px;
  margin: 12px 0 -3px 1px;
  padding: 9px 7px 0 5px;
  border-radius: 4px;
  background: #fff;
  box-shadow: 0 1px 2px rgba(20, 30, 50, 0.16);
}
.card h3 {
  margin: 0;
  font-size: 9.600px;
  line-height: 13px;
  font-weight: 600;
}
.owner {
  position: absolute;
  right: 5px;
  top: 5px;
  display: grid;
  place-items: center;
  width: 17px;
  height: 17px;
  border: 1px solid #c9ccd3;
  border-radius: 50%;
  background: #f2f3f7;
  color: #636975;
}
.owner .icon {
  width: 8px;
  height: 8px;
  stroke-width: 2.500;
}
.card dl {
  display: grid;
  grid-template-columns: 80px 1fr;
  row-gap: 9px;
  margin: 15px 0 0;
  color: #7f838b;
  font-size: 8.500px;
  line-height: 12px;
  white-space: nowrap;
}
.card dt {
  font-weight: 500;
}
.card dd {
  margin: 0;
  font-size: 8.300px;
}
.card-icons {
  display: flex;
  gap: 7px;
  margin-top: 11px;
  color: #686e79;
}
.card-icons span {
  position: relative;
  height: 11px;
}
.card-icons .icon {
  display: block;
}
.card-icons i {
  position: absolute;
  left: 5px;
  top: -4px;
  width: 10px;
  height: 10px;
  border-radius: 50%;
  background: #2e5be0;
  color: #e3ebff;
  font: 500 6.500px/10px Inter, sans-serif;
  text-align: center;
}
.card + .card {
  margin-top: 11px;
}

.hand {
  position: absolute;
  left: 558px;
  top: 317px;
  width: 12px;
  height: 13px;
  overflow: visible;
  fill: #fff;
  stroke: #24262b;
  stroke-width: 2;
}

/* Screen sharing bar */
.sharing {
  position: absolute;
  left: 302px;
  top: 532px;
  display: flex;
  align-items: center;
  width: 396px;
  height: 33px;
  padding-left: 8px;
  background: #fff;
  box-shadow: 0 0 3px rgba(0, 0, 0, 0.6);
  color: #404247;
  font-size: 8.220px;
  font-weight: 500;
  white-space: nowrap;
}
.grip {
  width: 4px;
  height: 8px;
  border: solid #c5c5c5;
  border-width: 0 1px;
}
.share-text {
  margin-left: 7px;
}
.stop {
  width: 77px;
  height: 24px;
  margin-left: auto;
  border-radius: 12px;
  background: #e2e2e2;
  color: #66686c;
  font-size: 9.200px;
  line-height: 24px;
  text-align: center;
}
.sharing a {
  margin: 0 8px 0 7px;
  color: #3a62d2;
  font-size: 8.600px;
  text-decoration: underline;
}

/* Dock */
.dock {
  position: absolute;
  left: 108px;
  top: 572px;
  display: flex;
  gap: 9.950px;
  width: 783px;
  height: 50px;
  padding: 10px 0 0 10px;
  border-radius: 13px;
  background: rgba(150, 162, 190, 0.500);
  box-shadow: inset 0 0 1px 1px rgba(220, 225, 240, 0.3);
}
.dock-item {
  position: relative;
  flex: none;
  width: 29px;
  height: 29px;
}
.dock-item > svg {
  display: block;
  width: 29px;
  height: 29px;
}
.running::before {
  content: "";
  position: absolute;
  left: 13px;
  top: 34px;
  width: 3px;
  height: 3px;
  border-radius: 50%;
  background: #20242f;
}
.dock-cal {
  border-radius: 7px;
  background: #f8f8f8;
  text-align: center;
}
.dock-cal small {
  display: block;
  color: #e5444b;
  font-size: 6px;
  line-height: 7px;
  padding-top: 3px;
}
.dock-cal b {
  display: block;
  color: #303030;
  font-size: 18px;
  font-weight: 400;
  line-height: 17px;
}
.alert {
  position: absolute;
  right: -3px;
  top: -4px;
  width: 14px;
  height: 14px;
  border-radius: 50%;
  background: #e5323c;
  color: #fff;
  font: 500 8px/14px Inter, sans-serif;
  text-align: center;
}
.dock-sep {
  width: 1px;
  height: 38px;
  margin: -5px 3px 0 4px;
  background: #6b7593;
}
.dock-sep.right {
  margin: -5px -3px 0 5px;
}
.dock-item.minimized,
.minimized > svg {
  width: 35px;
}
.minimized > svg {
  overflow: visible;
}
.dock-item.trash {
  margin-left: -3px;
}
.shelf {
  position: absolute;
  left: 138px;
  bottom: 0;
  width: 612px;
  height: 3px;
  border-radius: 4px 4px 0 0;
  background: #b4bacd;
}
</style>
